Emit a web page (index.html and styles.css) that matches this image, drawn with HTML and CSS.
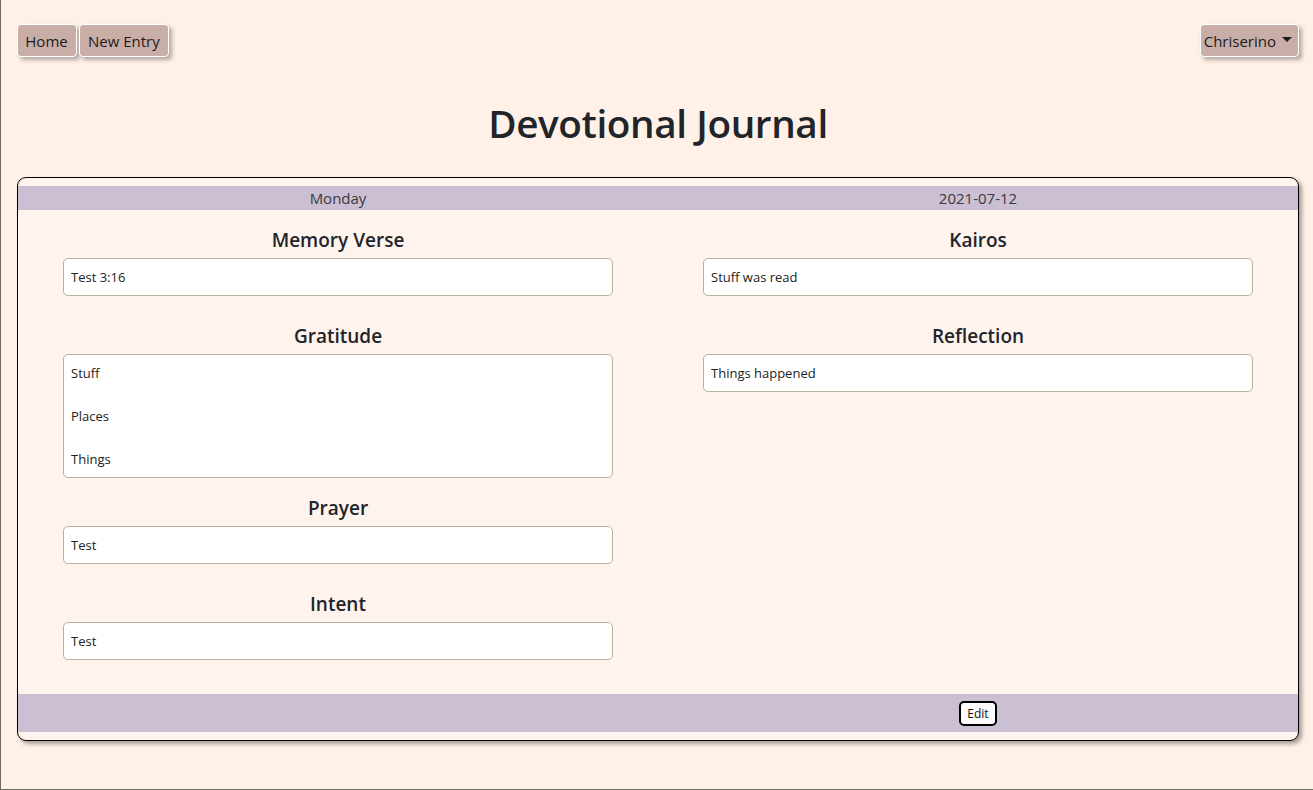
FILE: index.html
```html
<!DOCTYPE html>
<html lang="en">
<head>
<meta charset="utf-8">
<title>Devotional Journal</title>
<link rel="stylesheet" href="styles.css">
</head>
<body>
<div class="page">
  <nav class="topnav">
    <div class="nav-left">
      <a class="navbtn" href="#">Home</a>
      <a class="navbtn" href="#">New Entry</a>
    </div>
    <button class="navbtn dropdown" type="button">Chriserino<span class="caret"></span></button>
  </nav>

  <h1 class="title">Devotional Journal</h1>

  <section class="card">
    <div class="card-head">
      <span>Monday</span>
      <span>2021-07-12</span>
    </div>
    <div class="card-body">
      <div class="col">
        <div class="field">
          <h5 class="label">Memory Verse</h5>
          <div class="box single">Test 3:16</div>
        </div>
        <div class="field">
          <h5 class="label">Gratitude</h5>
          <div class="box multi">
            <p>Stuff</p>
            <p>Places</p>
            <p>Things</p>
          </div>
        </div>
        <div class="field">
          <h5 class="label">Prayer</h5>
          <div class="box single">Test</div>
        </div>
        <div class="field">
          <h5 class="label">Intent</h5>
          <div class="box single">Test</div>
        </div>
      </div>
      <div class="col">
        <div class="field">
          <h5 class="label">Kairos</h5>
          <div class="box single">Stuff was read</div>
        </div>
        <div class="field">
          <h5 class="label">Reflection</h5>
          <div class="box single">Things happened</div>
        </div>
      </div>
    </div>
    <div class="card-foot">
      <span></span>
      <span class="foot-cell"><button class="edit" type="button">Edit</button></span>
    </div>
  </section>
</div>
</body>
</html>
```

FILE: styles.css
```css
* { box-sizing: border-box; }

html, body {
  height: 100%;
  margin: 0;
}

body {
  background: #fff1e7;
  font-family: "Open Sans", "Noto Sans", sans-serif;
  color: #212529;
  border-left: 1px solid #6d6d60;
  border-bottom: 1px solid #6d6d60;
}

.page {
  padding: 24px 14px 0 16px;
}

.topnav {
  display: flex;
  justify-content: space-between;
  align-items: flex-start;
  padding: 0 0 0 1px;
}

.nav-left {
  display: flex;
  gap: 2px;
}

.navbtn {
  display: inline-flex;
  align-items: center;
  height: 33px;
  padding: 0 8px;
  background: #c9aea8;
  border: 1px solid #ffffff;
  border-radius: 4px;
  box-shadow: 3px 3px 4px rgba(0, 0, 0, 0.3);
  color: #1b1b1b;
  font-family: inherit;
  font-size: 15px;
  text-decoration: none;
}

.navbtn:first-child {
  padding: 0 7px 0 6px;
  margin-left: -1px;
  width: 60px;
  justify-content: center;
}

.dropdown {
  padding: 0 6px 0 3px;
  cursor: pointer;
}

.caret {
  display: inline-block;
  margin-left: 6px;
  border-top: 5px solid #1b1b1b;
  border-left: 5px solid transparent;
  border-right: 5px solid transparent;
  transform: translateY(-1px);
}

.title {
  margin: 42px 0 30px;
  text-align: center;
  font-size: 38.7px;
  font-weight: 600;
  line-height: 48px;
  letter-spacing: -0.4px;
  color: #212529;
}

.card {
  background: #fff3ee;
  border: 1px solid #000;
  border-radius: 9px;
  box-shadow: 3px 3px 4px rgba(0, 0, 0, 0.35);
  padding: 8px 0;
}

.card-head {
  display: grid;
  grid-template-columns: 1fr 1fr;
  background: #cbbfd3;
  height: 24px;
  line-height: 24px;
  font-size: 15px;
  color: #3a3a3a;
  text-align: center;
}

.card-body {
  display: grid;
  grid-template-columns: 1fr 1fr;
  padding: 18px 0 6px;
}

.col {
  display: flex;
  flex-direction: column;
  align-items: center;
}

.field {
  width: 550px;
  margin-bottom: 18px;
}

.label {
  margin: 0 0 6px;
  text-align: center;
  font-size: 19px;
  font-weight: 600;
  line-height: 24px;
  color: #212529;
}

.box {
  background: #ffffff;
  border: 1px solid #b9b09f;
  border-radius: 5px;
  font-size: 13px;
  color: #222;
  padding: 0 7px;
}

.box.single {
  height: 38px;
  line-height: 36px;
  margin-bottom: 10px;
}

.box.multi {
  height: 124px;
  padding-top: 9px;
}

.box.multi p {
  margin: 0 0 24px;
  line-height: 19px;
}

.card-foot {
  display: grid;
  grid-template-columns: 1fr 1fr;
  background: #cbbfd3;
  height: 38px;
  align-items: center;
}

.foot-cell {
  display: flex;
  justify-content: center;
}

.edit {
  width: 38px;
  height: 25px;
  padding: 0;
  background: #fdfbfc;
  border: 2px solid #000;
  border-radius: 5px;
  font-family: inherit;
  font-size: 12px;
  color: #111;
  cursor: pointer;
}
```
